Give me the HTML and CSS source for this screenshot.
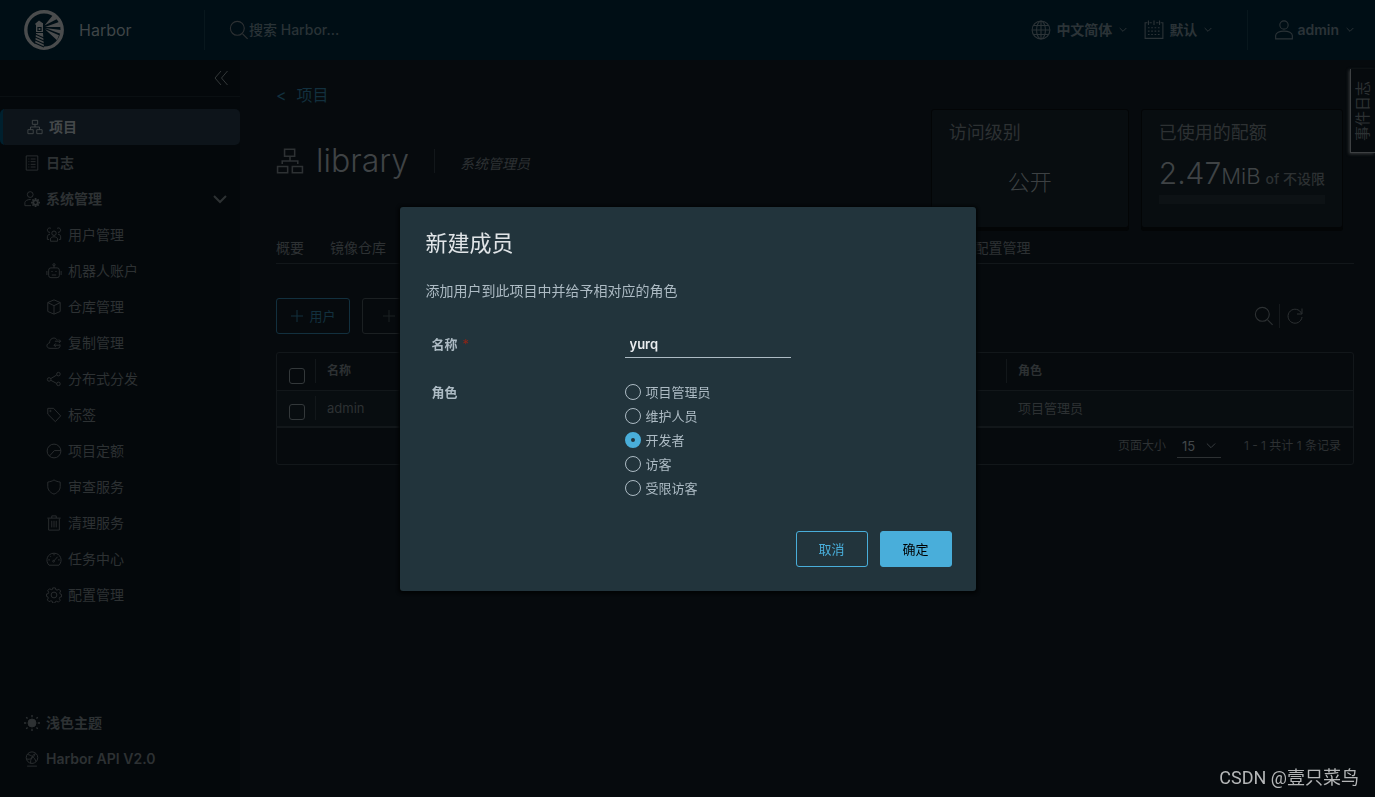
FILE: index.html
```html
<!DOCTYPE html>
<html lang="zh-CN">
<head>
<meta charset="utf-8">
<title>Harbor</title>
<link rel="stylesheet" href="styles.css">
</head>
<body>
<div class="app">
  <header class="header">
    <a class="brand" href="#">
      <svg class="logo" viewBox="0 0 40 40"><circle cx="20" cy="20" r="18.2" fill="none" stroke="currentColor" stroke-width="3.4"/><path fill="currentColor" d="M15 10.500l3.500 2.500h.5v2h-7.500v-2h.5zM12 15h7v7h-7zM12 23h7l1 15-9-2z"/><path fill="none" stroke="#000e15" stroke-width="1.200" d="M14 17.500v3h3v-3zM11 24l9 4M11 27l9 4M11 30l9 4M11 33l9 4"/><path fill="currentColor" d="M20.500 15.500L29 5l4 4zM21 17l14-5 2 5zM21 18l16 2v4zM21 19.200l14 6-2 5z"/></svg>
      <span class="brand-name">Harbor</span>
    </a>
    <label class="search"><svg class="i20" viewBox="0 0 36 36"><circle cx="15" cy="15" r="12.500"/><path d="M24.500 25l9 9"/></svg><input type="text" placeholder="搜索 Harbor..." aria-label="搜索 Harbor"></label>
    <div class="header-actions">
      <button class="hbtn" type="button"><svg class="i20" viewBox="0 0 36 36"><circle cx="18" cy="18" r="16"/><ellipse cx="18" cy="18" rx="8" ry="16"/><path d="M18 2v32M2 18h32M5 10h26M5 26h26"/></svg><span>中文简体</span><svg class="i8" viewBox="0 0 12 12"><path d="M1 3l5 5 5-5"/></svg></button>
      <button class="hbtn" type="button"><svg class="i20" viewBox="0 0 36 36"><path d="M6 5H2v28h32V5h-4M10 5h4M18 5h0M22 5h4M8 1v8M18 1v8M28 1v8"/><path stroke-dasharray="3 3" d="M7 14h23M7 20h23M7 26h23"/></svg><span>默认</span><svg class="i8" viewBox="0 0 12 12"><path d="M1 3l5 5 5-5"/></svg></button>
      <button class="hbtn user" type="button"><svg class="i20" viewBox="0 0 36 36"><circle cx="18" cy="9" r="7.500"/><path d="M3 34v-6c0-5 7-8 15-8s15 3 15 8v6z"/></svg><span>admin</span><svg class="i8" viewBox="0 0 12 12"><path d="M1 3l5 5 5-5"/></svg></button>
    </div>
  </header>
  <div class="body">
    <nav class="sidebar">
      <div class="collapse"><button type="button" aria-label="收起"><svg class="i14" viewBox="0 0 14 14"><path d="M7 0L1 7l6 7M13.500 0l-6 7 6 7"/></svg></button></div>
      <div class="nav">
        <a class="nav-item active" href="#"><svg class="i16" viewBox="0 0 36 36"><path d="M12 3h12v9H12zM2 24h12v9H2zM22 24h12v9H22zM18 12v6M8 24v-6h20v6"/></svg>项目</a>
        <a class="nav-item" href="#"><svg class="i16" viewBox="0 0 36 36"><path d="M5 2h26v32H5zM10 9h2M15 9h11M10 15h2M15 15h11M10 21h2M15 21h11M10 27h2M15 27h11"/></svg>日志</a>
        <a class="nav-item" href="#"><svg class="i16" viewBox="0 0 36 36"><circle cx="14" cy="8" r="6.500"/><path d="M16 33H2v-7c0-4 6-7 13-7h1"/><circle cx="26" cy="26" r="5" stroke-width="4"/><path stroke-width="4" d="M26 16v4M26 32v4M16 26h4M32 26h4M19 19l3 3M30 30l3 3M33 19l-3 3M22 30l-3 3"/></svg>系统管理<svg class="i14 chev" viewBox="0 0 14 14"><path d="M1 4l6 6 6-6"/></svg></a>
        <div class="sub">
          <a class="nav-item" href="#"><svg class="i16" viewBox="0 0 36 36"><circle cx="18" cy="14" r="5"/><path d="M10 32v-5c0-3 4-5 8-5s8 2 8 5v5zM11 3a5 5 0 1 0-2 9M25 3a5 5 0 1 1 2 9M7 28H3v-6c0-3 2-5 6-6M29 28h4v-6c0-3-2-5-6-6"/></svg>用户管理</a>
          <a class="nav-item" href="#"><svg class="i16" viewBox="0 0 36 36"><rect x="6" y="11" width="24" height="22" rx="5"/><path d="M18 11V6M13 27h10M2 18v9M34 18v9M12 19h3M21 19h3"/><circle cx="18" cy="4" r="2.500"/></svg>机器人账户</a>
          <a class="nav-item" href="#"><svg class="i16" viewBox="0 0 36 36"><path d="M18 2l14 6v20l-14 6-14-6V8zM4 8l14 7 14-7M18 15v19"/></svg>仓库管理</a>
          <a class="nav-item" href="#"><svg class="i16" viewBox="0 0 36 36"><path d="M31 21c2 4 0 9-5 9H9c-9 0-9-11-1-12C8 5 23 4 25 12M20 14h13M29 10l4 4-4 4M31 23H18M22 19l-4 4 4 4"/></svg>复制管理</a>
          <a class="nav-item" href="#"><svg class="i16" viewBox="0 0 36 36"><circle cx="7" cy="19" r="4"/><circle cx="28" cy="7" r="4"/><circle cx="28" cy="29" r="4"/><path d="M11 17l13-8M11 21l13 7"/></svg>分布式分发</a>
          <a class="nav-item" href="#"><svg class="i16" viewBox="0 0 36 36"><path d="M4 3h13l16 17-12 13L4 16z"/><circle cx="10" cy="9" r="1.500"/></svg>标签</a>
          <a class="nav-item" href="#"><svg class="i16" viewBox="0 0 36 36"><circle cx="18" cy="18" r="15.500"/><path d="M33 17H19L8 29"/></svg>项目定额</a>
          <a class="nav-item" href="#"><svg class="i16" viewBox="0 0 36 36"><path d="M18 2c4 3 9 4 14 5v10c0 8-6 14-14 17C10 31 4 25 4 17V7c5-1 10-2 14-5z"/></svg>审查服务</a>
          <a class="nav-item" href="#"><svg class="i16" viewBox="0 0 36 36"><path d="M6 8v26h24V8M3 7h30M13 7V2h10v5M13 13v15M18 13v15M23 13v15"/></svg>清理服务</a>
          <a class="nav-item" href="#"><svg class="i16" viewBox="0 0 36 36"><path d="M7 32C-3 22 3 5 18 5s21 17 11 27zM18 22l8-9M5 20h4M27 20h4M18 6v4M9 11l2 2"/><circle cx="17" cy="23" r="2"/></svg>任务中心</a>
          <a class="nav-item" href="#"><svg class="i16" viewBox="0 0 36 36"><circle cx="18" cy="18" r="6.500"/><path d="M15 2h6l1 4 3 1 4-2 4 4-2 4 1 3 3 1v5l-4 1-1 3 2 4-4 4-4-2-3 1-1 3h-5l-1-4-3-1-4 2-4-4 2-4-1-3-3-1v-5l4-1 1-3-2-4 4-4 4 2 3-1z"/></svg>配置管理</a>
        </div>
      </div>
      <div class="nav nav-bottom">
        <a class="nav-item" href="#"><svg class="i16" viewBox="0 0 36 36"><circle cx="18" cy="18" r="9" fill="currentColor"/><path stroke-width="3" d="M18 0v5M18 31v5M0 18h5M31 18h5M5 5l3 3M28 28l3 3M31 5l-3 3M8 28l-3 3"/></svg>浅色主题</a>
        <a class="nav-item" href="#"><svg class="i16" viewBox="0 0 36 36"><circle cx="18" cy="15" r="13"/><path d="M8 8c8 1 16 6 19 16M6 18c8 2 16-2 19-12M15 28c-1-8 2-16 9-22M7 34h22"/></svg>Harbor API V2.0</a>
      </div>
    </nav>
    <main class="content">
      <a class="back" href="#"><span>&lt;</span><span>项目</span></a>
      <div class="summary">
        <div class="title">
          <svg class="i28" viewBox="0 0 36 36"><path d="M11 3h13v9H11zM2 25h13v8H2zM21 25h13v8H21zM18 12v6M8 22v-4h20v4"/></svg>
          <h1>library</h1>
          <em>系统管理员</em>
        </div>
        <div class="cards">
          <section class="card"><h2>访问级别</h2><div class="level">公开</div></section>
          <section class="card"><h2>已使用的配额</h2><div class="quota"><span class="num">2.47</span><span class="unit">MiB</span><span class="of">of 不设限</span></div><div class="bar"></div></section>
        </div>
      </div>
      <div class="tabs"><div class="tab-list"><div class="tab-group"><button type="button">概要</button><button type="button">镜像仓库</button></div><button type="button">配置管理</button></div></div>
      <div class="toolbar">
        <button class="btn add" type="button"><svg class="i14" viewBox="0 0 14 14"><path d="M7 1v12M1 7h12"/></svg>用户</button>
        <button class="btn add off" type="button" disabled aria-label="组"><svg class="i14" viewBox="0 0 14 14"><path d="M7 1v12M1 7h12"/></svg></button>
        <div class="tools">
          <button type="button" aria-label="搜索"><svg class="i20" viewBox="0 0 36 36"><circle cx="15" cy="15" r="12.500"/><path d="M24.500 25l9 9"/></svg></button>
          <button type="button" aria-label="刷新"><svg class="i18" viewBox="0 0 36 36"><path d="M31 13A14 14 0 1 0 32 20M32 3v11H22"/></svg></button>
        </div>
      </div>
      <div class="grid">
        <table>
          <thead><tr><th class="check"><input type="checkbox" aria-label="全选"></th><th><div class="cell">名称</div></th><th class="role"><div class="cell">角色</div></th></tr></thead>
          <tbody><tr><td class="check"><input type="checkbox" aria-label="选择 admin"></td><td><div class="cell">admin</div></td><td class="role"><div class="cell plain">项目管理员</div></td></tr></tbody>
        </table>
        <div class="pager">
          <label for="size">页面大小</label>
          <span class="select"><select id="size"><option>15</option></select><svg class="i10" viewBox="0 0 12 12"><path d="M1 3l5 5 5-5"/></svg></span>
          <span class="count">1 - 1 共计 1 条记录</span>
        </div>
      </div>
    </main>
  </div>
</div>
<button class="events" type="button"><span>事件日志</span></button>
<div class="overlay">
  <form class="modal" role="dialog" aria-labelledby="dlg">
    <h3 id="dlg">新建成员</h3>
    <p>添加用户到此项目中并给予相对应的角色</p>
    <div class="row"><label class="lbl" for="name">名称<span class="req">*</span></label><input class="text" id="name" type="text" value="yurq"></div>
    <div class="row roles"><span class="lbl" id="rl">角色</span>
      <div class="radios" role="radiogroup" aria-labelledby="rl">
        <label><input type="radio" name="role">项目管理员</label>
        <label><input type="radio" name="role">维护人员</label>
        <label><input type="radio" name="role" checked>开发者</label>
        <label><input type="radio" name="role">访客</label>
        <label><input type="radio" name="role">受限访客</label>
      </div>
    </div>
    <div class="actions"><button class="btn" type="button">取消</button><button class="btn primary" type="button">确定</button></div>
  </form>
</div>
<div class="watermark">CSDN @壹只菜鸟</div>
</body>
</html>
```
FILE: styles.css
```css
* { box-sizing: border-box; }
body {
  margin: 0;
  font: 14px/24px Inter, "Noto Sans CJK SC", sans-serif;
  color: #2d3133;
  background: #060a0d;
}
button, input, select { font: inherit; color: inherit; background: none; border: 0; padding: 0; margin: 0; }
a { color: inherit; text-decoration: none; }
svg { fill: none; stroke: currentColor; stroke-width: 2; flex: none; }
.logo { stroke: none; width: 40px; height: 40px; }
.i8 { width: 8px; height: 8px; }
.i10 { width: 10px; height: 10px; stroke-width: 1; }
.i14 { width: 14px; height: 14px; stroke-width: 1; }
.i16 { width: 16px; height: 16px; }
.i18 { width: 18px; height: 18px; }
.i20 { width: 20px; height: 20px; }
.i28 { width: 28px; height: 28px; }

.app { min-height: 100vh; display: flex; flex-direction: column; }
.header { height: 60px; display: flex; align-items: center; background: #000e15; }
.brand { display: flex; align-items: center; gap: 15px; width: 205px; height: 40px; padding-left: 24px; color: #4a4c4d; border-right: 1px solid #08171d; }
.brand-name { font-size: 16px; color: #3f4547; }
.search { display: flex; align-items: center; padding-left: 24px; flex: 1; }
.search input { width: 160px; outline: 0; }
.search input::placeholder { color: #293236; opacity: 1; font-weight: 500; }
.header-actions { display: flex; align-items: center; font-weight: 600; color: #2b3337; }
.hbtn { display: flex; align-items: center; gap: 5px; margin-right: 17px; }
.hbtn .i8 { margin-left: 2px; }
.hbtn.user { height: 40px; padding-left: 26px; margin: 0 21px 0 18px; gap: 3px; border-left: 1px solid #08171d; }
.hbtn.user .i8 { margin-left: 4px; }
.hbtn .i8 path { stroke-width: 1.5; }

.body { flex: 1; display: flex; }
.sidebar { width: 240px; flex: none; display: flex; flex-direction: column; background: #04080b; }
.collapse { height: 37px; display: flex; align-items: center; justify-content: flex-end; padding-right: 12px; border-bottom: 1px solid #0a0f12; color: #34383a; }
.collapse button { display: flex; }
.nav { padding-top: 12px; }
.nav-bottom { margin-top: auto; padding-bottom: 20px; }
.nav-item { display: flex; align-items: center; gap: 6px; height: 36px; padding-left: 24px; font-weight: 600; }
.nav-item.active { background: #0d141a; color: #44484a; border-left: 3px solid #00202e; border-radius: 5px; }
.sub .nav-item { padding-left: 46px; font-weight: 400; }
.chev { margin-left: auto; margin-right: 13px; stroke-width: 2; }

.content { flex: 1; min-width: 0; padding: 23px 21px 0 36px; }
.back { display: flex; gap: 10px; font-size: 16px; color: #12303e; }
.summary { display: flex; justify-content: space-between; padding-right: 11px; }
.title { display: flex; align-items: center; height: 60px; margin-top: 24px; gap: 12px; }
h1 { margin: 0; font-size: 32px; line-height: 40px; font-weight: 300; color: #3f4345; }
.title em { height: 24px; margin-left: 13px; padding-left: 25px; border-left: 1px solid #12171a; line-height: 30px; }
.cards { display: flex; gap: 12px; margin-top: 2px; }
.card { min-width: 198px; height: 119px; padding: 11px 17px; background: #080d10; border: 1px solid #030506; border-radius: 3px; box-shadow: 0 3px 0 #030506; }
.card h2 { margin: 0; font-size: 18px; line-height: 24px; font-weight: 400; }
.level { text-align: center; font-size: 22px; line-height: 32px; margin-top: 21px; font-weight: 300; color: #3d4143; }
.quota { display: flex; align-items: baseline; margin-top: 12px; line-height: 32px; white-space: nowrap; color: #3f4345; }
.num { font-size: 30px; font-weight: 300; }
.unit { font-size: 22px; font-weight: 300; }
.of { margin-left: 5px; font-weight: 500; color: #2d3133; }
.bar { height: 9px; background: #0d1215; }
.tabs { margin-top: 5px; border-bottom: 1px solid #12171a; }
.tab-list { width: 70%; height: 30px; display: flex; justify-content: space-between; align-items: center; }
.tab-group { display: flex; gap: 26px; }
.toolbar { display: flex; gap: 12px; margin-top: 34px; }
.btn { height: 36px; min-width: 72px; border: 1px solid #49aeda; border-radius: 3px; font-size: 13px; color: #49aeda; }
.add { width: 74px; display: flex; align-items: center; justify-content: center; gap: 5px; border-color: #12303e; color: #12303e; }
.off { border-color: #1b2022; color: #1b2022; }
.off svg { margin-right: 20px; }
.tools { display: flex; align-items: center; margin: 0 50px 0 auto; }
.tools button { display: flex; padding-right: 5px; align-items: center; height: 24px; }
.tools button + button { padding: 0 0 0 6px; border-left: 1px solid #15191c; }
.grid { margin-top: 18px; border: 1px solid #12171a; border-radius: 3px; font-size: 13px; }
table { width: 100%; border-collapse: collapse; table-layout: fixed; }
th, td { height: 37px; padding: 0; text-align: left; border-bottom: 1px solid #12171a; }
tbody { background: #080d10; }
tbody td { border-bottom-width: 2px; }
th { font-size: 12px; }
.check { width: 38px; text-align: center; vertical-align: bottom; padding-bottom: 6px; line-height: 16px; }
.check input { appearance: none; width: 16px; height: 16px; border: 1px solid #33383a; border-radius: 3px; display: block; margin: 0 0 0 12px; }
.cell { border-left: 1px solid #12171a; padding-left: 11px; line-height: 24px; }
.cell.plain { border-color: transparent; }
.role { width: 347px; }
.pager { height: 36px; display: flex; align-items: center; justify-content: flex-end; padding-right: 12px; font-size: 12px; }
.select { display: flex; align-items: center; width: 44px; height: 24px; margin: 0 23px 0 11px; padding: 0 5px; border-bottom: 1px solid #2d3133; color: #42474a; }
.select select { appearance: none; flex: 1; font-size: 13px; }

.events { position: absolute; right: 0; top: 69px; width: 25px; height: 84px; background: #060a0d; border-left: 1px solid #3d4042; border-bottom: 1px solid #3d4042; box-shadow: -1px 1px 3px #35383a; }
.events span { display: block; writing-mode: vertical-rl; text-orientation: sideways; transform: rotate(180deg); font-size: 15px; line-height: 24px; height: 82px; text-align: center; }

.overlay { position: fixed; inset: 0; display: grid; place-items: center; }
.modal { width: 576px; padding: 24px; background: #22343c; border-radius: 3px; box-shadow: 0 1px 3px 2px #030506; color: #adbbc4; }
.modal h3 { margin: 0 2px; font-size: 22px; line-height: 24px; font-weight: 400; color: #e0e4e7; }
.modal p { margin: 24px 2px 0; font-size: 14px; }
.row { display: flex; align-items: flex-start; margin-top: 29px; font-size: 13px; padding-left: 8px; }
.lbl { width: 193px; font-weight: 600; }
.req { color: #8f2416; margin-left: 5px; font-weight: 400; }
.text { width: 166px; height: 26px; padding: 0 5px; border-bottom: 1px solid #adbbc4; color: #e9ecef; font-weight: 600; outline: 0; }
.roles { margin-top: 22px; }
.radios { display: grid; }
.radios label { display: flex; align-items: center; gap: 5px; }
.radios input { appearance: none; width: 16px; height: 16px; border: 1px solid #adbbc4; border-radius: 50%; }
.radios input:checked { border: 6px solid #49aeda; }
.actions { display: flex; justify-content: flex-end; gap: 12px; margin-top: 31px; }
.primary { background: #49aeda; color: #000; }
.watermark { position: fixed; right: 16px; bottom: 7px; font: 18px/24px Roboto, "Noto Sans CJK SC", sans-serif; color: #b4b6b7; }
```
